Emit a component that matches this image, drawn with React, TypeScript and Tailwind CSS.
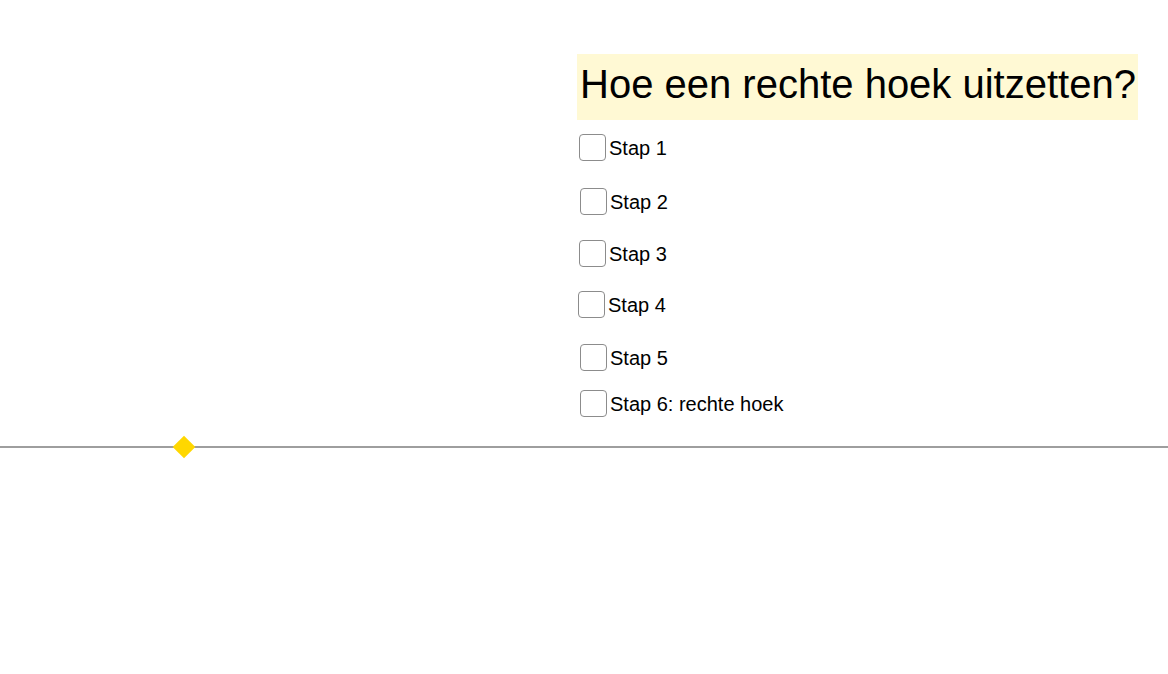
const steps = [
  { label: "Stap 1", mt: "mt-[14px]", ml: "ml-[2px]" },
  { label: "Stap 2", mt: "mt-[27px]", ml: "ml-[3px]" },
  { label: "Stap 3", mt: "mt-[25px]", ml: "ml-[2px]" },
  { label: "Stap 4", mt: "mt-[24px]", ml: "ml-[1px]" },
  { label: "Stap 5", mt: "mt-[26px]", ml: "ml-[3px]" },
  { label: "Stap 6: rechte hoek", mt: "mt-[19px]", ml: "ml-[3px]" },
];

function Step({ label, mt, ml }: { label: string; mt: string; ml: string }) {
  return (
    <label className={`flex items-center h-[27px] gap-[3px] ${mt} ${ml}`}>
      <span className="w-[27px] h-[27px] rounded-[4px] border border-[#8c8c8c] bg-white shrink-0" />
      <span className="text-[20px] leading-[25px] pt-[2px] text-black">{label}</span>
    </label>
  );
}

export default function App() {
  return (
    <main
      className="w-[1168px] h-[674px] bg-white overflow-hidden flex flex-col"
      style={{ fontFamily: '"Liberation Sans", Arial, sans-serif' }}
    >
      <section className="pt-[54px] pl-[577px] flex flex-col">
        <div className="w-[561px] h-[66px] bg-[#fff9d4] flex items-center pl-[3px] pb-[6px]">
          <h1 className="text-[40px] leading-none text-black whitespace-nowrap">
            Hoe een rechte hoek uitzetten?
          </h1>
        </div>
        {steps.map((s) => (
          <Step key={s.label} {...s} />
        ))}
      </section>

      <div className="relative mt-[29px] h-[2px] w-full bg-[#9e9e9e]">
        <span className="absolute left-[176px] top-[-7px] w-[16px] h-[16px] rotate-45 bg-[#ffd700]" />
      </div>
    </main>
  );
}
